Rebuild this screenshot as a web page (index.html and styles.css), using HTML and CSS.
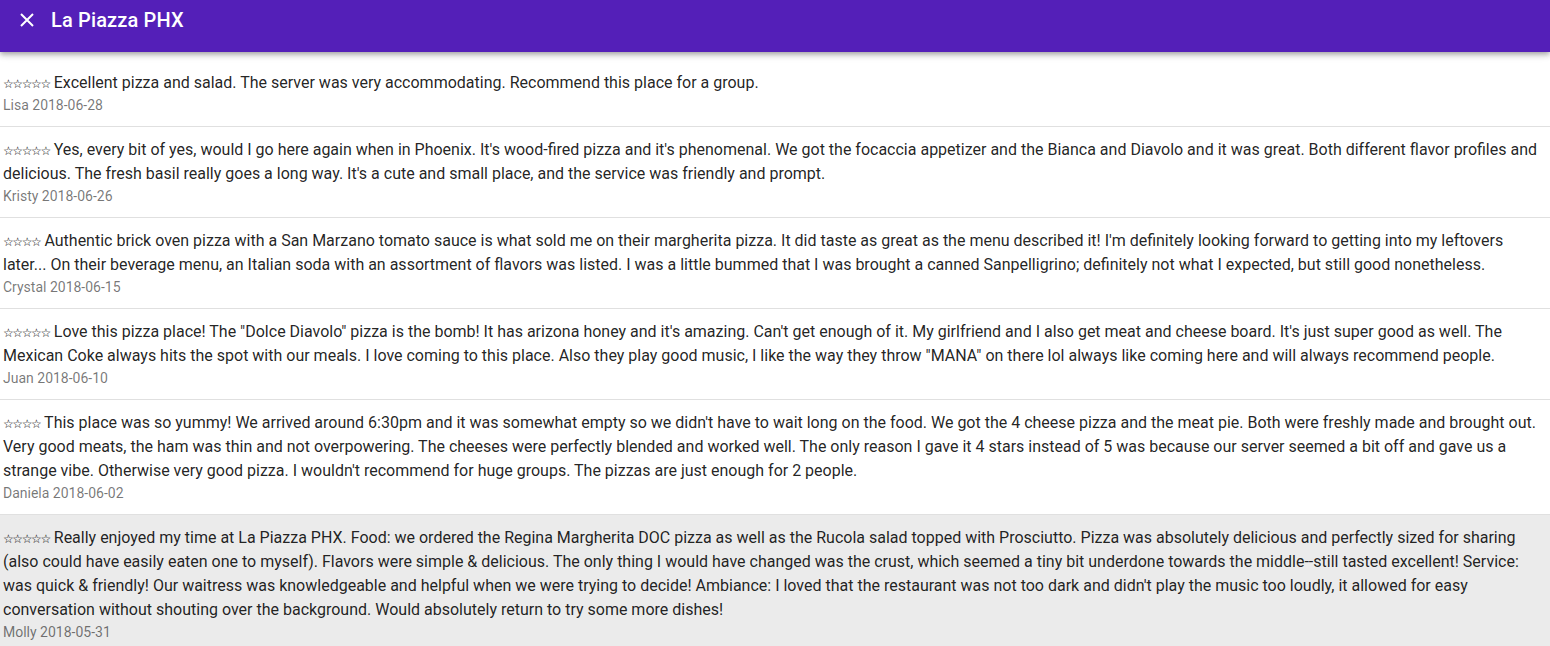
FILE: index.html
```html
<!DOCTYPE html>
<html>
<head>
<meta charset="utf-8">
<link rel="stylesheet" href="styles.css">
</head>
<body>
<header class="appbar">
  <button class="close" aria-label="close">
    <svg width="14" height="14" viewBox="0 0 14 14"><path d="M1 1L13 13M13 1L1 13" stroke="#fff" stroke-width="2" fill="none"/></svg>
  </button>
  <h1 class="title">La Piazza PHX</h1>
</header>
<ul class="list">
  <li class="item">
    <div class="primary"><span class="stars">☆☆☆☆☆</span> Excellent pizza and salad. The server was very accommodating. Recommend this place for a group.</div>
    <div class="secondary">Lisa 2018-06-28</div>
  </li>
  <li class="item">
    <div class="primary"><span class="stars">☆☆☆☆☆</span> Yes, every bit of yes, would I go here again when in Phoenix. It's wood-fired pizza and it's phenomenal. We got the focaccia appetizer and the Bianca and Diavolo and it was great. Both different flavor profiles and delicious. The fresh basil really goes a long way. It's a cute and small place, and the service was friendly and prompt.</div>
    <div class="secondary">Kristy 2018-06-26</div>
  </li>
  <li class="item">
    <div class="primary"><span class="stars">☆☆☆☆</span> Authentic brick oven pizza with a San Marzano tomato sauce is what sold me on their margherita pizza. It did taste as great as the menu described it! I'm definitely looking forward to getting into my leftovers later... On their beverage menu, an Italian soda with an assortment of flavors was listed. I was a little bummed that I was brought a canned Sanpelligrino; definitely not what I expected, but still good nonetheless.</div>
    <div class="secondary">Crystal 2018-06-15</div>
  </li>
  <li class="item">
    <div class="primary"><span class="stars">☆☆☆☆☆</span> Love this pizza place! The "Dolce Diavolo" pizza is the bomb! It has arizona honey and it's amazing. Can't get enough of it. My girlfriend and I also get meat and cheese board. It's just super good as well. The Mexican Coke always hits the spot with our meals. I love coming to this place. Also they play good music, I like the way they throw "MANA" on there lol always like coming here and will always recommend people.</div>
    <div class="secondary">Juan 2018-06-10</div>
  </li>
  <li class="item">
    <div class="primary"><span class="stars">☆☆☆☆</span> This place was so yummy! We arrived around 6:30pm and it was somewhat empty so we didn't have to wait long on the food. We got the 4 cheese pizza and the meat pie. Both were freshly made and brought out. Very good meats, the ham was thin and not overpowering. The cheeses were perfectly blended and worked well. The only reason I gave it 4 stars instead of 5 was because our server seemed a bit off and gave us a strange vibe. Otherwise very good pizza. I wouldn't recommend for huge groups. The pizzas are just enough for 2 people.</div>
    <div class="secondary">Daniela 2018-06-02</div>
  </li>
  <li class="item selected">
    <div class="primary"><span class="stars">☆☆☆☆☆</span> Really enjoyed my time at La Piazza PHX. Food: we ordered the Regina Margherita DOC pizza as well as the Rucola salad topped with Prosciutto. Pizza was absolutely delicious and perfectly sized for sharing (also could have easily eaten one to myself). Flavors were simple &amp; delicious. The only thing I would have changed was the crust, which seemed a tiny bit underdone towards the middle--still tasted excellent! Service: was quick &amp; friendly! Our waitress was knowledgeable and helpful when we were trying to decide! Ambiance: I loved that the restaurant was not too dark and didn't play the music too loudly, it allowed for easy conversation without shouting over the background. Would absolutely return to try some more dishes!</div>
    <div class="secondary">Molly 2018-05-31</div>
  </li>
</ul>
</body>
</html>
```
FILE: styles.css
```css
html, body {
  margin: 0;
  padding: 0;
  background: #fff;
  font-family: Roboto, "Liberation Sans", sans-serif;
  overflow: hidden;
}
.appbar {
  position: relative;
  z-index: 2;
  height: 64px;
  margin-top: -12px;
  background: #541fb8;
  color: #fff;
  display: flex;
  align-items: center;
  box-shadow: 0 2px 4px -1px rgba(0,0,0,0.2), 0 4px 5px 0 rgba(0,0,0,0.14), 0 1px 10px 0 rgba(0,0,0,0.12);
}
.close {
  background: none;
  border: 0;
  padding: 0;
  margin: 0 0 0 20px;
  width: 14px;
  height: 14px;
  display: flex;
  cursor: pointer;
}
.title {
  margin: 0 0 0 17px;
  font-size: 20px;
  font-weight: 500;
  line-height: 1;
  letter-spacing: 0.15px;
}
.list {
  list-style: none;
  margin: 0;
  padding: 8px 0 0;
}
.item {
  padding: 11px 0 11px 3px;
  border-bottom: 1px solid #e0e0e0;
}
.item.selected {
  background: #ebebeb;
}
.primary {
  font-size: 16px;
  line-height: 24px;
  color: rgba(0,0,0,0.87);
}
.stars {
  font-family: "DejaVu Sans", sans-serif;
  font-size: 12px;
  line-height: 1;
  letter-spacing: -1.4px;
  color: #000;
}
.secondary {
  font-size: 14px;
  line-height: 20px;
  color: rgba(0,0,0,0.54);
}
```
